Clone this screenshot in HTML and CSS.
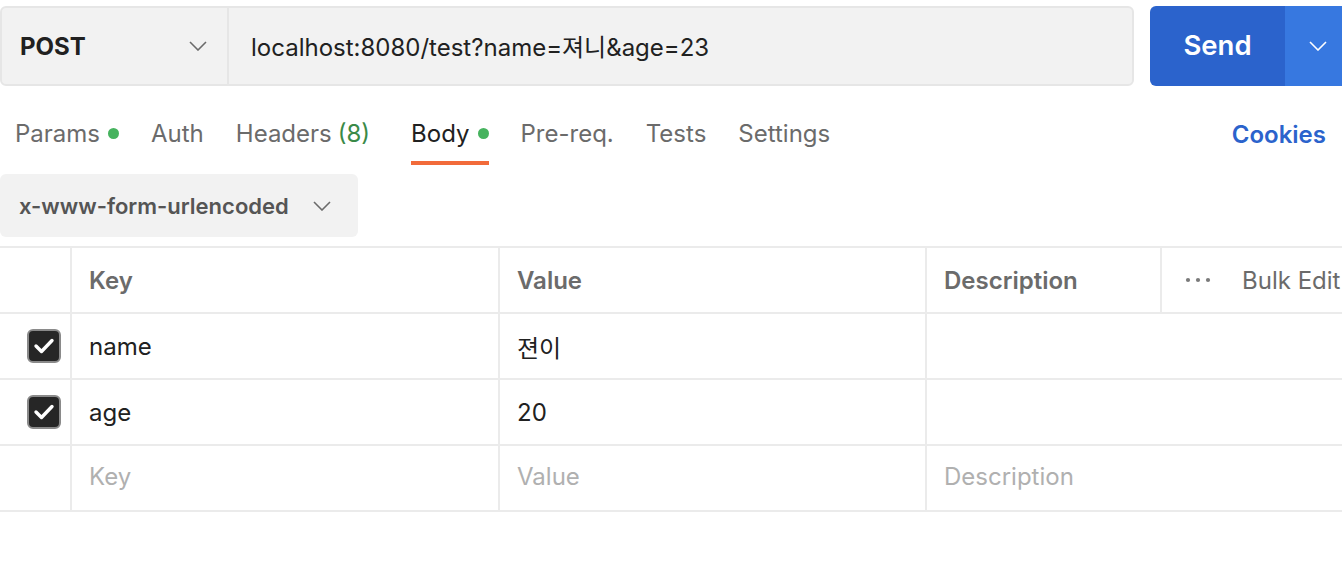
FILE: index.html
```html
<!DOCTYPE html>
<html lang="ko">
<head>
<meta charset="utf-8">
<title>Request</title>
<link rel="stylesheet" href="styles.css">
</head>
<body>
<div class="page">
  <div class="topbar">
    <div class="urlbox">
      <div class="method">
        <span class="method-name">POST</span>
        <svg class="chev" width="18" height="10" viewBox="0 0 18 10"><path d="M1 1 L9 9 L17 1" fill="none" stroke="#6b6b6b" stroke-width="1.6"/></svg>
      </div>
      <div class="url">localhost:8080/test?name=져니&amp;age=23</div>
    </div>
    <div class="send">
      <div class="send-main">Send</div>
      <div class="send-more">
        <svg width="18" height="10" viewBox="0 0 18 10"><path d="M1 1 L9 9 L17 1" fill="none" stroke="#ffffff" stroke-width="1.6"/></svg>
      </div>
    </div>
  </div>

  <div class="tabs">
    <div class="tab">Params<span class="dot"></span></div>
    <div class="tab">Auth</div>
    <div class="tab tab-headers">Headers <span class="count">(8)</span></div>
    <div class="tab active">Body<span class="dot"></span></div>
    <div class="tab">Pre-req.</div>
    <div class="tab">Tests</div>
    <div class="tab">Settings</div>
    <div class="spacer"></div>
    <div class="cookies">Cookies</div>
  </div>

  <div class="bodytype">
    <span>x-www-form-urlencoded</span>
    <svg class="chev" width="18" height="10" viewBox="0 0 18 10"><path d="M1 1 L9 9 L17 1" fill="none" stroke="#6b6b6b" stroke-width="1.6"/></svg>
  </div>

  <div class="table">
    <div class="row head">
      <div class="cell check"></div>
      <div class="cell">Key</div>
      <div class="cell">Value</div>
      <div class="cell desc-head">Description</div>
      <div class="cell bulk">
        <svg width="26" height="6" viewBox="0 0 26 6"><circle cx="3" cy="3" r="2.1" fill="#7a7a7a"/><circle cx="13" cy="3" r="2.1" fill="#7a7a7a"/><circle cx="23" cy="3" r="2.1" fill="#7a7a7a"/></svg>
        <span>Bulk Edit</span>
      </div>
    </div>
    <div class="row">
      <div class="cell check"><span class="box"><svg width="22" height="18" viewBox="0 0 22 18"><path d="M3 9 L8.5 14.5 L19 3.5" fill="none" stroke="#fff" stroke-width="3.4" stroke-linecap="round" stroke-linejoin="round"/></svg></span></div>
      <div class="cell">name</div>
      <div class="cell">젼이</div>
      <div class="cell wide"></div>
    </div>
    <div class="row">
      <div class="cell check"><span class="box"><svg width="22" height="18" viewBox="0 0 22 18"><path d="M3 9 L8.5 14.5 L19 3.5" fill="none" stroke="#fff" stroke-width="3.4" stroke-linecap="round" stroke-linejoin="round"/></svg></span></div>
      <div class="cell">age</div>
      <div class="cell">20</div>
      <div class="cell wide"></div>
    </div>
    <div class="row">
      <div class="cell check"></div>
      <div class="cell ph">Key</div>
      <div class="cell ph">Value</div>
      <div class="cell wide ph">Description</div>
    </div>
  </div>
</div>
</body>
</html>
```

FILE: styles.css
```css
html, body {
  margin: 0;
  padding: 0;
  background: #ffffff;
  overflow: hidden;
}
body {
  font-family: Inter, "Noto Sans CJK KR", sans-serif;
  color: #212121;
}
.page {
  padding-top: 6px;
  width: 1342px;
}
.topbar {
  display: flex;
  height: 80px;
  gap: 16px;
}
.urlbox {
  flex: 0 0 1134px;
  box-sizing: border-box;
  display: flex;
  background: #f2f2f2;
  border: 2px solid #e6e6e6;
  border-radius: 6px;
}
.method {
  flex: 0 0 227px;
  box-sizing: border-box;
  border-right: 2px solid #e6e6e6;
  display: flex;
  align-items: center;
  justify-content: space-between;
  padding: 0 20px 0 18px;
}
.method-name {
  font-weight: 700;
  font-size: 24px;
  color: #212121;
}
.url {
  display: flex;
  align-items: center;
  padding-left: 22px;
  padding-bottom: 2px;
  font-size: 24px;
  color: #212121;
}
.send {
  flex: 1;
  display: flex;
  border-radius: 6px 0 0 6px;
  overflow: hidden;
}
.send-main {
  flex: 0 0 135px;
  background: #2b63cc;
  color: #fff;
  font-weight: 600;
  font-size: 27.5px;
  display: flex;
  align-items: center;
  justify-content: center;
  padding-bottom: 2px;
}
.send-more {
  flex: 1;
  background: #3778e0;
  display: flex;
  align-items: center;
  padding-left: 24px;
}
.tabs {
  display: flex;
  align-items: stretch;
  height: 62px;
  margin-top: 17px;
  padding: 0 16px 0 15px;
}
.tab {
  display: flex;
  align-items: center;
  font-size: 24px;
  color: #6b6b6b;
  margin-right: 32px;
  border-bottom: 4px solid transparent;
  box-sizing: border-box;
  padding-top: 2px;
}
.tab.tab-headers {
  margin-right: 41px;
}
.tab.active {
  color: #212121;
  border-bottom-color: #f26b3a;
}
.dot {
  width: 11px;
  height: 11px;
  border-radius: 50%;
  background: #46b35e;
  margin-left: 8px;
}
.count {
  color: #3a8a47;
  margin-left: 6px;
}
.spacer { flex: 1; }
.cookies {
  display: flex;
  align-items: center;
  font-size: 24px;
  font-weight: 600;
  color: #2b63cc;
}
.bodytype {
  margin-top: 9px;
  width: 358px;
  height: 63px;
  box-sizing: border-box;
  background: #f2f2f2;
  border-radius: 6px;
  display: flex;
  align-items: center;
  justify-content: space-between;
  padding: 0 27px 0 19px;
  font-size: 22px;
  font-weight: 600;
  color: #555555;
}
.table {
  margin-top: 9px;
  border-top: 2px solid #ebebeb;
}
.row {
  display: grid;
  grid-template-columns: 72px 428px 427px 1fr;
  height: 66px;
  box-sizing: border-box;
  border-bottom: 2px solid #ebebeb;
}
.row.head {
  grid-template-columns: 72px 428px 427px 235px 1fr;
}
.cell {
  display: flex;
  align-items: center;
  padding-left: 17px;
  font-size: 24px;
  color: #212121;
  border-right: 2px solid #ebebeb;
  white-space: nowrap;
  overflow: hidden;
}
.cell:last-child { border-right: none; }
.head .cell {
  font-weight: 600;
  color: #6b6b6b;
}
.cell.check {
  padding-left: 0;
  justify-content: flex-end;
  padding-right: 9px;
}
.box {
  width: 34px;
  height: 34px;
  box-sizing: border-box;
  border: 2px solid #8a8a8a;
  border-radius: 6px;
  background: #262626;
  display: flex;
  align-items: center;
  justify-content: center;
}
.bulk {
  padding-left: 23px;
  gap: 31px;
}
.head .bulk span {
  font-weight: 400;
  color: #6b6b6b;
}
.ph {
  color: #b0b0b0;
  padding-bottom: 4px;
}
```
